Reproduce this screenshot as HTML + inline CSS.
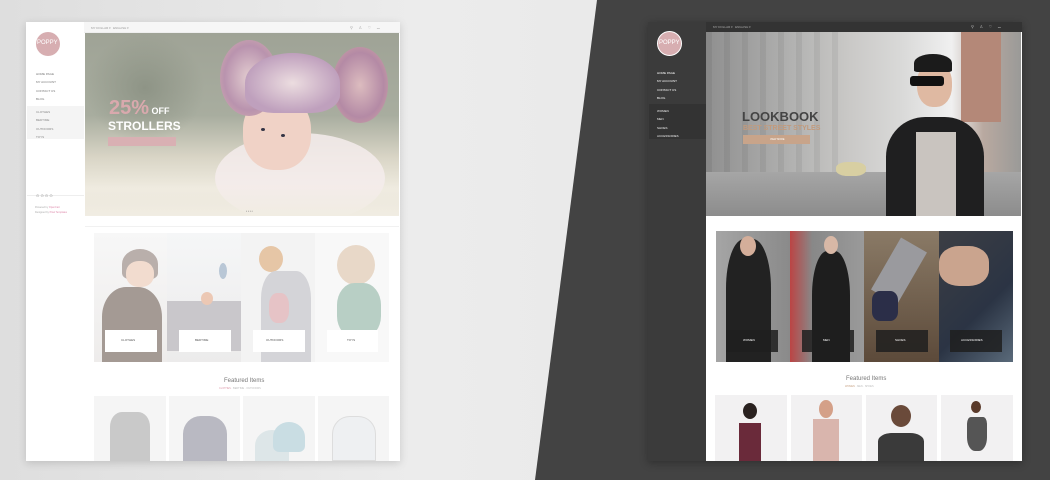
<!DOCTYPE html>
<html><head><meta charset="utf-8"><style>
*{margin:0;padding:0;box-sizing:border-box}
body{width:1050px;height:480px;overflow:hidden;background:#e6e6e6;position:relative;font-family:"Liberation Sans",sans-serif}
.a{position:absolute}
.t{position:absolute;font-size:3px;white-space:nowrap}
</style></head><body>
<div class="a" style="left:0;top:0;width:1050px;height:480px;background:linear-gradient(90deg,#dedede,#ececec 40%,#e4e4e4)"></div>
<svg class="a" style="left:0;top:0" width="1050" height="480"><polygon points="597,0 1050,0 1050,480 535,480" fill="#434343"/></svg>

<!-- LEFT MOCKUP -->
<div class="a" style="left:26px;top:22px;width:374px;height:439px;background:#fff;box-shadow:0 2px 8px rgba(0,0,0,.15)"></div>
<div class="a" style="left:84px;top:22px;width:316px;height:11px;background:#f6f6f6;border-bottom:1px solid #eee"></div>
<div class="t" style="left:91px;top:26px;color:#999">MY DOLLAR ▾ &nbsp; ENGLISH ▾</div>
<div class="t" style="left:350px;top:25px;color:#aaa;font-size:4px">⚲ &nbsp;&nbsp;&nbsp; ♙ &nbsp;&nbsp;&nbsp; ♡ &nbsp;&nbsp;&nbsp; ⌴</div>
<div class="a" style="left:36px;top:32px;width:24px;height:24px;border-radius:50%;background:#d7aeb1"></div>
<div class="t" style="left:37px;top:40px;color:#fff;font-size:6px">POPPY</div>
<div class="t" style="left:36px;top:70px;color:#777;line-height:8.4px">HOME PAGE<br>MY ACCOUNT<br>CONTACT US<br>BLOG</div>
<div class="a" style="left:27px;top:106px;width:57px;height:33px;background:#f4f4f4"></div>
<div class="t" style="left:36px;top:108px;color:#888;line-height:8.4px">CLOTHES<br>BEDTIME<br>OUTDOORS<br>TOYS</div>
<div class="a" style="left:27px;top:195px;width:57px;height:1px;background:#eee"></div>
<div class="t" style="left:36px;top:193px;color:#999;font-size:4px">⊙ ⊙ ⊙ ⊙</div>
<div class="t" style="left:35px;top:205px;color:#aaa;line-height:5px;font-size:2.5px">Powered by <span style="color:#d8a">OpenCart</span><br>Designed by <span style="color:#d8a">Pixel Templates</span></div>
<!-- hero -->
<div class="a" style="left:85px;top:33px;width:314px;height:183px;overflow:hidden;background:linear-gradient(180deg,#9fa396 0%,#a8ad9f 45%,#d9d5c6 68%,#efebe0 85%,#e6e1d3 100%)">
 <div class="a" style="left:0;top:0;width:120px;height:110px;background:radial-gradient(ellipse at 50% 50%,#8e9486,transparent 70%)"></div>
 <div class="a" style="left:130px;top:100px;width:170px;height:90px;border-radius:50%;background:#f4ecec;opacity:.85"></div>
 <div class="a" style="left:158px;top:62px;width:68px;height:75px;border-radius:45%;background:#f0d2c6"></div>
 <div class="a" style="left:135px;top:7px;width:58px;height:76px;border-radius:50%;background:radial-gradient(#e3cdd0,#b993ae 60%,#d9b3ae)"></div>
 <div class="a" style="left:247px;top:14px;width:56px;height:76px;border-radius:50%;background:radial-gradient(#dcbcbf,#b48aa5 60%,#d7aaa5)"></div>
 <div class="a" style="left:160px;top:20px;width:95px;height:60px;border-radius:50% 50% 30% 30%;background:radial-gradient(#ecdde0,#bfa0bd 70%)"></div>
 <div class="a" style="left:176px;top:95px;width:4px;height:3px;border-radius:50%;background:#334"></div>
 <div class="a" style="left:196px;top:101px;width:4px;height:3px;border-radius:50%;background:#334"></div>
 <div class="a" style="left:0;top:150px;width:314px;height:33px;background:linear-gradient(180deg,rgba(240,236,226,0),#f1ede3)"></div>
 <div class="t" style="left:24px;top:64px;font-size:20px;font-weight:bold;color:#d9a9ad">25%<span style="font-size:9px;color:#fff"> OFF</span></div>
 <div class="t" style="left:23px;top:86px;font-size:12px;font-weight:bold;color:#fff">STROLLERS</div>
 <div class="a" style="left:23px;top:104px;width:68px;height:9px;background:#d9b0b3"></div>
 <div class="t" style="left:161px;top:176px;color:#666;font-size:3px">• • • •</div>
</div>
<div class="a" style="left:85px;top:226px;width:314px;height:1px;background:#f1f1f1"></div>
<!-- tiles -->
<div class="a" style="left:94px;top:233px;width:73px;height:129px;background:linear-gradient(#f7f7f7,#eeeceb)">
 <div class="a" style="left:28px;top:16px;width:36px;height:30px;border-radius:50% 50% 20% 20%;background:#b9afab"></div>
 <div class="a" style="left:32px;top:28px;width:28px;height:26px;border-radius:45%;background:#f2dccf"></div>
 <div class="a" style="left:8px;top:54px;width:60px;height:75px;border-radius:40% 40% 0 0;background:#a49a94"></div>
</div>
<div class="a" style="left:167px;top:233px;width:74px;height:129px;background:linear-gradient(#f5f6f7,#ecebeb)">
 <div class="a" style="left:0;top:68px;width:74px;height:50px;background:#c9c7cb"></div>
 <div class="a" style="left:34px;top:59px;width:12px;height:13px;border-radius:50%;background:#ecc8b4"></div>
 <div class="a" style="left:52px;top:30px;width:8px;height:16px;border-radius:50%;background:#b9c7d6"></div>
</div>
<div class="a" style="left:241px;top:233px;width:74px;height:129px;background:#f3f3f3">
 <div class="a" style="left:18px;top:13px;width:24px;height:26px;border-radius:50%;background:#e6c6a6"></div>
 <div class="a" style="left:20px;top:38px;width:50px;height:91px;border-radius:30% 30% 0 0;background:#d4d4d8"></div>
 <div class="a" style="left:28px;top:60px;width:20px;height:30px;border-radius:40%;background:#e6c3c6"></div>
</div>
<div class="a" style="left:315px;top:233px;width:74px;height:129px;background:#f8f8f8">
 <div class="a" style="left:22px;top:12px;width:38px;height:40px;border-radius:50%;background:#e8d8c8"></div>
 <div class="a" style="left:22px;top:50px;width:44px;height:55px;border-radius:40%;background:#b8cfc5"></div>
</div>
<div class="a" style="left:105px;top:330px;width:52px;height:22px;background:#fff"></div>
<div class="a" style="left:179px;top:330px;width:52px;height:22px;background:#fff"></div>
<div class="a" style="left:253px;top:330px;width:52px;height:22px;background:#fff"></div>
<div class="a" style="left:327px;top:330px;width:51px;height:22px;background:#fff"></div>
<div class="t" style="left:121px;top:338px;color:#555">CLOTHES</div>
<div class="t" style="left:195px;top:338px;color:#555">BEDTIME</div>
<div class="t" style="left:266px;top:338px;color:#555">OUTDOORS</div>
<div class="t" style="left:347px;top:338px;color:#555">TOYS</div>
<div class="t" style="left:224px;top:378px;font-size:6px;color:#777">Featured Items</div>
<div class="t" style="left:219px;top:387px;font-size:2.5px;color:#bbb"><span style="color:#d9a">CLOTHES</span> · BEDTIME · OUTDOORS</div>
<div class="a" style="left:94px;top:396px;width:72px;height:65px;background:#f5f5f5"><div class="a" style="left:16px;top:16px;width:40px;height:49px;background:#c9c9c9;border-radius:30% 30% 0 0"></div></div>
<div class="a" style="left:169px;top:396px;width:71px;height:65px;background:#f5f5f5"><div class="a" style="left:14px;top:20px;width:44px;height:45px;background:#b9b9c2;border-radius:40% 40% 0 0"></div></div>
<div class="a" style="left:243px;top:396px;width:72px;height:65px;background:#f5f5f5"><div class="a" style="left:12px;top:34px;width:34px;height:31px;background:#dde6e8;border-radius:50% 50% 0 0"></div><div class="a" style="left:30px;top:26px;width:32px;height:30px;background:#c9dde3;border-radius:50% 50% 20% 20%"></div></div>
<div class="a" style="left:318px;top:396px;width:71px;height:65px;background:#f5f5f5"><div class="a" style="left:14px;top:20px;width:44px;height:45px;background:#eef0f2;border:1px solid #ddd;border-radius:40% 40% 0 0"></div></div>

<!-- RIGHT MOCKUP -->
<div class="a" style="left:648px;top:22px;width:374px;height:439px;background:#fff;box-shadow:0 2px 8px rgba(0,0,0,.3)"></div>
<div class="a" style="left:648px;top:22px;width:58px;height:439px;background:#3b3b3b"></div>
<div class="a" style="left:706px;top:22px;width:316px;height:10px;background:#333"></div>
<div class="t" style="left:713px;top:25px;color:#aaa">MY DOLLAR ▾ &nbsp; ENGLISH ▾</div>
<div class="t" style="left:971px;top:24px;color:#bbb;font-size:4px">⚲ &nbsp;&nbsp;&nbsp; ♙ &nbsp;&nbsp;&nbsp; ♡ &nbsp;&nbsp;&nbsp; ⌴</div>
<div class="a" style="left:657px;top:31px;width:25px;height:25px;border-radius:50%;background:#d7aeb1;border:1px solid #fff"></div>
<div class="t" style="left:659px;top:40px;color:#fff;font-size:6px">POPPY</div>
<div class="t" style="left:657px;top:69px;color:#fff;line-height:8.4px">HOME PAGE<br>MY ACCOUNT<br>CONTACT US<br>BLOG</div>
<div class="a" style="left:649px;top:104px;width:57px;height:35px;background:#333"></div>
<div class="t" style="left:657px;top:107px;color:#eee;line-height:8.4px">WOMEN<br>MEN<br>SHOES<br>ACCESSORIES</div>
<div class="a" style="left:706px;top:32px;width:315px;height:184px;overflow:hidden;background:linear-gradient(90deg,#8f8f8f 0%,#b5b5b4 30%,#c9c8c6 45%,#d9d9d8 62%,#f0f0f0 78%,#b9a9a0 88%,#9a9a98 100%)">
 <div class="a" style="left:0;top:0;width:140px;height:140px;background:repeating-linear-gradient(90deg,rgba(0,0,0,.06) 0 6px,transparent 6px 18px)"></div>
 <div class="a" style="left:0;top:140px;width:315px;height:44px;background:linear-gradient(#a6a6a6,#8c8c8c)"></div>
 <div class="a" style="left:255px;top:0;width:40px;height:90px;background:#b48878"></div>
 <div class="a" style="left:130px;top:130px;width:30px;height:14px;border-radius:40%;background:#d8cfa2"></div>
 <div class="a" style="left:180px;top:85px;width:98px;height:99px;border-radius:40% 40% 0 0;background:#1f1f20"></div>
 <div class="a" style="left:210px;top:100px;width:40px;height:84px;background:#c9c4bf"></div>
 <div class="a" style="left:211px;top:30px;width:35px;height:45px;border-radius:45%;background:#dfb9a2"></div>
 <div class="a" style="left:208px;top:22px;width:38px;height:18px;border-radius:50% 50% 10% 10%;background:#1b1b1b"></div>
 <div class="a" style="left:204px;top:44px;width:34px;height:10px;background:#111;border-radius:3px"></div>
 <div class="t" style="left:36px;top:77px;font-size:13px;font-weight:bold;color:#444">LOOKBOOK</div>
 <div class="t" style="left:37px;top:93px;font-size:7px;font-weight:bold;color:#c29a7c">BEST STREET STYLES</div>
 <div class="a" style="left:37px;top:103px;width:67px;height:9px;background:#c8a48a"></div>
 <div class="t" style="left:64px;top:106px;font-size:2.5px;color:#fff">VIEW MORE</div>
</div>
<div class="a" style="left:716px;top:231px;width:74px;height:131px;background:linear-gradient(90deg,#a5a5a5,#8a8a8a)"><div class="a" style="left:10px;top:8px;width:45px;height:123px;border-radius:40% 40% 0 0;background:#222"></div><div class="a" style="left:24px;top:5px;width:16px;height:20px;border-radius:50%;background:#d4ae9a"></div></div>
<div class="a" style="left:790px;top:231px;width:74px;height:131px;background:linear-gradient(90deg,#b44,#888 30%,#9a9a9a)"><div class="a" style="left:22px;top:20px;width:38px;height:111px;border-radius:40% 40% 0 0;background:#1e1e1e"></div><div class="a" style="left:34px;top:5px;width:14px;height:18px;border-radius:50%;background:#d8b8a6"></div></div>
<div class="a" style="left:864px;top:231px;width:75px;height:131px;background:linear-gradient(#8a7a66,#5c4a3a)"><div class="a" style="left:20px;top:10px;width:30px;height:60px;background:#9a9a9e;transform:rotate(30deg)"></div><div class="a" style="left:8px;top:60px;width:26px;height:30px;border-radius:30%;background:#2b2e48"></div></div>
<div class="a" style="left:939px;top:231px;width:74px;height:131px;background:linear-gradient(135deg,#3c3e44,#2b3444 60%,#5a6a7a)"><div class="a" style="left:0;top:15px;width:50px;height:40px;border-radius:40%;background:#caa48e"></div></div>
<div class="a" style="left:726px;top:330px;width:52px;height:22px;background:rgba(30,30,30,.85)"></div>
<div class="a" style="left:802px;top:330px;width:52px;height:22px;background:rgba(30,30,30,.85)"></div>
<div class="a" style="left:876px;top:330px;width:52px;height:22px;background:rgba(30,30,30,.85)"></div>
<div class="a" style="left:950px;top:330px;width:52px;height:22px;background:rgba(30,30,30,.85)"></div>
<div class="t" style="left:743px;top:338px;color:#fff">WOMEN</div>
<div class="t" style="left:823px;top:338px;color:#fff">MEN</div>
<div class="t" style="left:895px;top:338px;color:#fff">SHOES</div>
<div class="t" style="left:961px;top:338px;color:#fff">ACCESSORIES</div>
<div class="t" style="left:846px;top:376px;font-size:6px;color:#777">Featured Items</div>
<div class="t" style="left:845px;top:385px;font-size:2.5px;color:#bbb"><span style="color:#c8a486">WOMEN</span> · MEN · SHOES</div>
<div class="a" style="left:715px;top:395px;width:72px;height:66px;background:#f2f1f2"><div class="a" style="left:28px;top:8px;width:14px;height:16px;border-radius:50%;background:#2a2220"></div><div class="a" style="left:24px;top:28px;width:22px;height:38px;background:#6a2a3a"></div></div>
<div class="a" style="left:791px;top:395px;width:71px;height:66px;background:#f2f1f2"><div class="a" style="left:28px;top:5px;width:14px;height:18px;border-radius:50%;background:#d4a088"></div><div class="a" style="left:22px;top:24px;width:26px;height:42px;background:#d9b5ad"></div></div>
<div class="a" style="left:866px;top:395px;width:71px;height:66px;background:#f2f1f2"><div class="a" style="left:25px;top:10px;width:20px;height:22px;border-radius:50%;background:#6a4a3a"></div><div class="a" style="left:12px;top:38px;width:46px;height:28px;border-radius:30% 30% 0 0;background:#3a3a3a"></div></div>
<div class="a" style="left:941px;top:395px;width:72px;height:66px;background:#f2f1f2"><div class="a" style="left:30px;top:6px;width:10px;height:12px;border-radius:50%;background:#5a3a2a"></div><div class="a" style="left:26px;top:22px;width:20px;height:34px;background:#555;border-radius:20% 20% 40% 40%"></div></div>
</body></html>
